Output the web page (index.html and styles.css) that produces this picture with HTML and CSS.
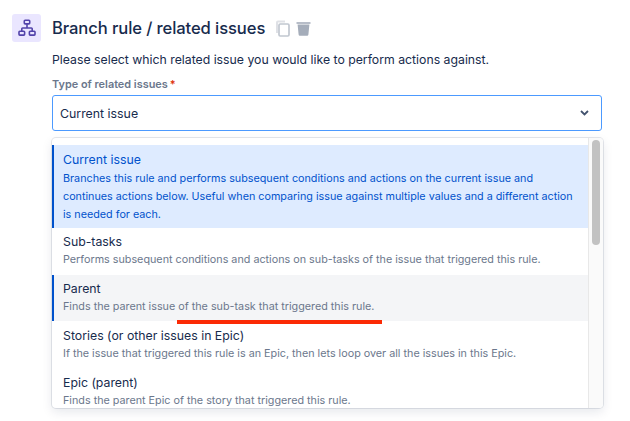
FILE: index.html
```
<!DOCTYPE html>
<html lang="en">
<head>
<meta charset="utf-8">
<title>Branch rule / related issues</title>
<link rel="stylesheet" href="styles.css">
</head>
<body>
<div class="page">
  <div class="rule-icon">
    <svg width="18" height="18" viewBox="0 0 18 18" fill="none" stroke="#5243aa" stroke-width="1.6">
      <rect x="6.3" y="1.3" width="5.4" height="3.6" rx="0.8"/>
      <rect x="1" y="12.3" width="5.6" height="3.8" rx="0.8"/>
      <rect x="11.4" y="12.3" width="5.6" height="3.8" rx="0.8"/>
      <path d="M9 5v4M3.8 12.3V9.8q0-.8.8-.8h8.8q.8 0 .8.8v2.5"/>
    </svg>
  </div>
  <div class="main">
    <div class="heading">
      <h1 class="title">Branch rule / related issues</h1>
      <svg class="copy" width="15" height="17" viewBox="0 0 15 17" fill="none">
        <path d="M2 13V2.5q0-1 1-1h7" stroke="#dfe1e6" stroke-width="2"/>
        <rect x="4" y="4" width="10" height="12" rx="1.2" stroke="#c1c7d0" stroke-width="1.7"/>
      </svg>
      <svg class="trash" width="15" height="15" viewBox="0 0 15 15">
        <path d="M0.5 1.2h14v1.6h-14z" fill="#a5adba"/>
        <path d="M1.6 3.6h11.8l-1 10q-.1 1.2-1.3 1.2H3.9q-1.2 0-1.3-1.2z" fill="#a5adba"/>
      </svg>
    </div>
    <p class="intro">Please select which related issue you would like to perform actions against.</p>
    <div class="label">Type of related issues<span class="req">*</span></div>
    <div class="select">
      <span>Current issue</span>
      <svg width="9" height="6" viewBox="0 0 9 6" fill="none"><path d="M1 1 4.5 4.4 8 1" stroke="#42526e" stroke-width="1.8"/></svg>
    </div>
    <div class="menu">
      <div class="list">
        <div class="option selected">
          <div class="name">Current issue</div>
          <div class="desc">Branches this rule and performs subsequent conditions and actions on the current issue and continues actions below. Useful when comparing issue against multiple values and a different action is needed for each.</div>
        </div>
        <div class="option">
          <div class="name">Sub-tasks</div>
          <div class="desc">Performs subsequent conditions and actions on sub-tasks of the issue that triggered this rule.</div>
        </div>
        <div class="option hovered">
          <div class="name">Parent</div>
          <div class="desc">Finds the parent issue of the sub-task that triggered this rule.</div>
          <div class="redline"></div>
        </div>
        <div class="option">
          <div class="name">Stories (or other issues in Epic)</div>
          <div class="desc">If the issue that triggered this rule is an Epic, then lets loop over all the issues in this Epic.</div>
        </div>
        <div class="option">
          <div class="name">Epic (parent)</div>
          <div class="desc">Finds the parent Epic of the story that triggered this rule.</div>
        </div>
      </div>
      <div class="track"><div class="thumb"></div></div>
    </div>
  </div>
</div>
</body>
</html>
```
FILE: styles.css
```
* { box-sizing: border-box; }
html, body { margin: 0; background: #fff; }
body {
  width: 630px;
  height: 421px;
  overflow: hidden;
  font-family: Inter, "Noto Sans", sans-serif;
  color: #172b4d;
}
.page {
  display: flex;
  align-items: flex-start;
  gap: 11px;
  padding: 14px 28px 0 12px;
}
.rule-icon {
  flex: none;
  width: 29px;
  height: 28px;
  border-radius: 3px;
  background: #eae6ff;
  display: flex;
  align-items: center;
  justify-content: center;
}
.main { flex: 1; min-width: 0; }
.heading {
  display: flex;
  align-items: center;
  height: 28px;
}
.title {
  margin: 0 10px 0 0;
  font-size: 16.6px;
  line-height: 28px;
  font-weight: 500;
  letter-spacing: -0.1px;
}
.copy { margin-right: 6px; }
.intro {
  margin: 9px 0 0;
  font-size: 12.27px;
  line-height: 17px;
}
.label {
  margin-top: 9px;
  font-size: 10.9px;
  line-height: 14px;
  font-weight: 600;
  color: #6b778c;
}
.req { color: #de350b; margin-left: 2px; }
.select {
  margin-top: 4px;
  height: 36px;
  border: 1.5px solid #4c9aff;
  border-radius: 3px;
  padding: 0 12px 0 7px;
  display: flex;
  align-items: center;
  justify-content: space-between;
  font-size: 12.35px;
}
.menu {
  margin-top: 7px;
  width: 551px;
  height: 270px;
  border-radius: 4px;
  background: #fff;
  box-shadow: 0 0 0 1px rgba(9,30,66,0.1), 0 4px 11px rgba(9,30,66,0.1);
  display: flex;
  overflow: hidden;
}
.list { flex: 1; min-width: 0; padding-top: 7px; overflow: hidden; }
.option {
  position: relative;
  padding: 5px 12px 6px 9px;
  border-left: 2px solid transparent;
}
.name {
  font-size: 12.3px;
  line-height: 17px;
}
.desc {
  margin-top: 1px;
  font-size: 10.77px;
  line-height: 18px;
  color: #6b778c;
}
.selected { background: #deebff; border-left-color: #0052cc; color: #0052cc; padding-top: 6px; padding-bottom: 4px; }
.selected .desc { color: #0052cc; margin-top: 2px; }
.hovered { background: #f4f5f7; border-left-color: #0052cc; padding-bottom: 5px; margin-bottom: 1px; }
.redline {
  position: absolute;
  left: 123px;
  top: 45px;
  width: 205px;
  height: 4px;
  background: #fb2a05;
}
.track {
  flex: none;
  width: 15px;
  background: #fafafa;
  border-left: 1px solid #e8e8e8;
  padding: 2px 3px 0 3px;
}
.thumb {
  width: 8px;
  height: 105px;
  border-radius: 4px;
  background: #c2c2c2;
}
```
